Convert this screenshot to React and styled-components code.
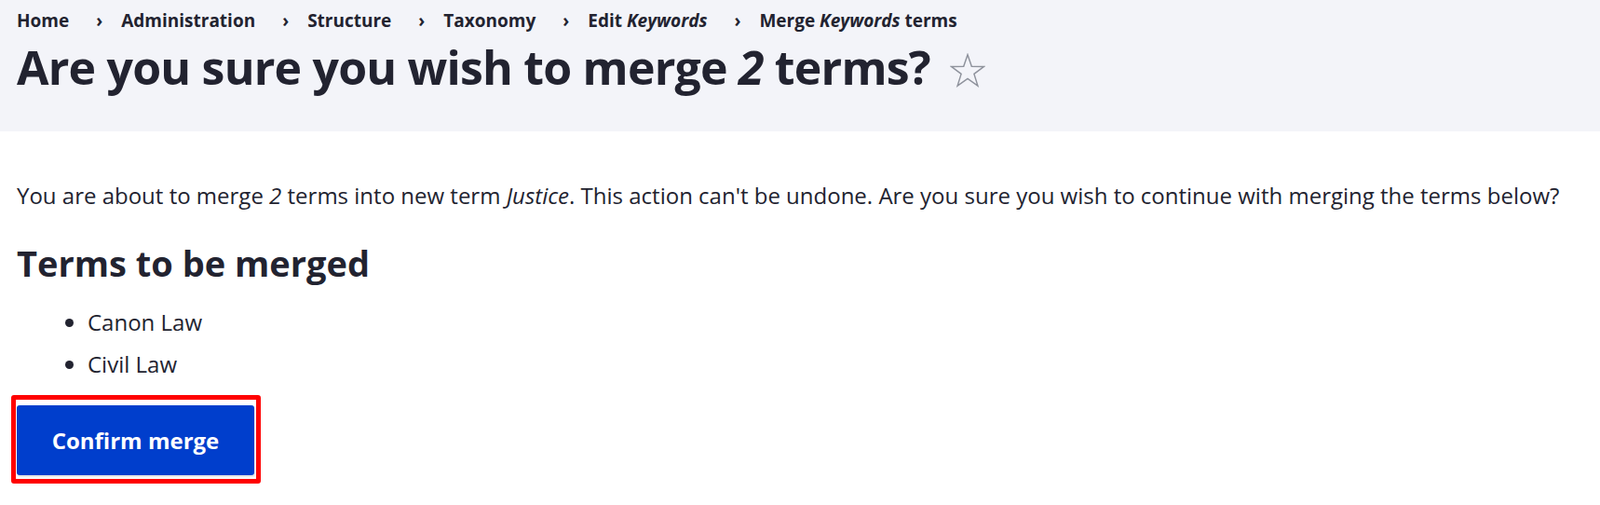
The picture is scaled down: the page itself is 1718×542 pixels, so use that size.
import { createGlobalStyle, styled } from 'styled-components';

const Global = createGlobalStyle`
    body {
        margin: 0;
        background: #ffffff;
        color: #222330;
        font-family: "Open Sans", "Noto Sans", sans-serif;
    }
`

const Header = styled.header`
    height: 141px;
    box-sizing: border-box;
    padding: 7px 18px 0;
    background-color: #f3f4f9;
`

const Crumbs = styled.ol`
    display: flex;
    align-items: center;
    margin: 0;
    padding: 0;
    list-style: none;
    font-size: 19px;
    line-height: 30px;
    font-weight: 700;
`

const Crumb = styled.li`
    display: flex;
    align-items: center;

    & + &::before {
        content: "›";
        padding: 0 20px 0 29px;
        font-weight: 700;
    }
`

const Title = styled.h1`
    display: flex;
    align-items: center;
    gap: 21px;
    margin: 5px 0 0;
    font-size: 50px;
    line-height: 60px;
    font-weight: 700;
    letter-spacing: -0.8px;

    svg {
        margin-top: 6px;
    }
`

const Main = styled.main`
    padding: 0 18px;
`

const Text = styled.p`
    margin: 51px 0 0;
    font-size: 24px;
    line-height: 35px;
`

const Subtitle = styled.h2`
    margin: 33px 0 0;
    font-size: 38px;
    line-height: 45px;
    font-weight: 700;
`

const Terms = styled.ul`
    margin: 23px 0 0;
    padding-left: 76px;
    font-size: 24px;
    line-height: 35px;

    li + li {
        margin-top: 10px;
    }
`

const Highlight = styled.div`
    display: inline-block;
    margin: 16px 0 0 -6px;
    padding: 6px 2px 4px 1px;
    border: 5px solid #ff0000;
    border-radius: 3px;
`

const Button = styled.button`
    display: block;
    width: 255px;
    height: 75px;
    border: 0;
    border-radius: 3px;
    background-color: #003ecc;
    box-shadow: 1px 2px 2px rgba(0, 0, 0, 0.12);
    color: #ffffff;
    font-family: inherit;
    font-size: 24px;
    font-weight: 700;
    cursor: pointer;
`

const Star = () => (
    <svg width="38" height="37" viewBox="-1 -1 39 38">
        <polygon
            points="18.5,0.7 22.9,13.6 36.6,13.8 25.6,22 29.7,35.1 18.5,27.2 7.3,35.1 11.4,22 0.4,13.8 14.1,13.6"
            fill="none"
            stroke="#8e929c"
            strokeWidth="1.5"
            strokeLinejoin="miter"
        />
    </svg>
)

const App = () => {
    return (
        <>
            <Global />
            <Header>
                <Crumbs>
                    <Crumb>Home</Crumb>
                    <Crumb>Administration</Crumb>
                    <Crumb>Structure</Crumb>
                    <Crumb>Taxonomy</Crumb>
                    <Crumb>Edit&nbsp;<em>Keywords</em></Crumb>
                    <Crumb>Merge&nbsp;<em>Keywords</em>&nbsp;terms</Crumb>
                </Crumbs>
                <Title>
                    <span>Are you sure you wish to merge <em>2</em> terms?</span>
                    <Star />
                </Title>
            </Header>
            <Main>
                <Text>
                    You are about to merge <em>2</em> terms into new term <em>Justice</em>. This action can't be undone. Are you sure you wish to continue with merging the terms below?
                </Text>
                <Subtitle>Terms to be merged</Subtitle>
                <Terms>
                    <li>Canon Law</li>
                    <li>Civil Law</li>
                </Terms>
                <Highlight>
                    <Button>Confirm merge</Button>
                </Highlight>
            </Main>
        </>
    )
}

export default App
